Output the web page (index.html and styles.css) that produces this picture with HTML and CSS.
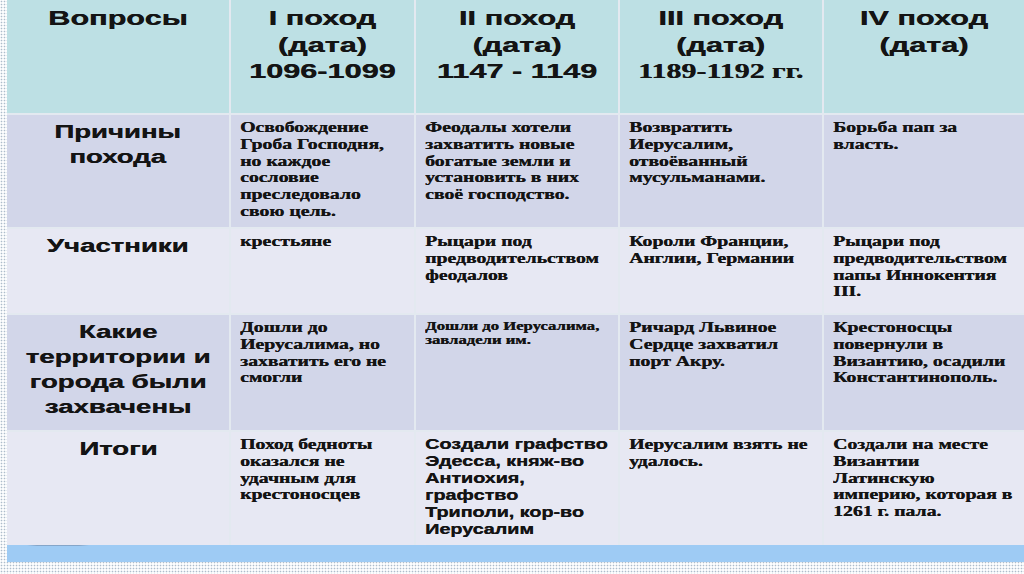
FILE: index.html
```html
<!DOCTYPE html>
<html lang="ru">
<head>
<meta charset="utf-8">
<title>Крестовые походы</title>
<link rel="stylesheet" href="styles.css">
</head>
<body>
<div class="sheet">
  <div class="grid">
    <div class="cell head"><div class="t hd">Вопросы</div></div>
    <div class="cell head"><div class="t hd">I поход<br>(дата)<br>1096-1099</div></div>
    <div class="cell head"><div class="t hd">II поход<br>(дата)<br>1147 - 1149</div></div>
    <div class="cell head"><div class="t hd">III поход<br>(дата)<br><span class="num">1189-1192 гг.</span></div></div>
    <div class="cell head"><div class="t hd">IV поход<br>(дата)</div></div>

    <div class="cell odd"><div class="t q">Причины<br>похода</div></div>
    <div class="cell odd"><div class="t s">Освобождение<br>Гроба Господня,<br>но каждое<br>сословие<br>преследовало<br>свою цель.</div></div>
    <div class="cell odd"><div class="t s">Феодалы хотели<br>захватить новые<br>богатые земли и<br>установить в них<br>своё господство.</div></div>
    <div class="cell odd"><div class="t s">Возвратить<br>Иерусалим,<br>отвоёванный<br>мусульманами.</div></div>
    <div class="cell odd"><div class="t s">Борьба пап за<br>власть.</div></div>

    <div class="cell even"><div class="t q">Участники</div></div>
    <div class="cell even"><div class="t s">крестьяне</div></div>
    <div class="cell even"><div class="t s">Рыцари под<br>предводительством<br>феодалов</div></div>
    <div class="cell even"><div class="t s">Короли Франции,<br>Англии, Германии</div></div>
    <div class="cell even"><div class="t s">Рыцари под<br>предводительством<br>папы Иннокентия<br>III.</div></div>

    <div class="cell odd"><div class="t q">Какие<br>территории и<br>города были<br>захвачены</div></div>
    <div class="cell odd"><div class="t s">Дошли до<br>Иерусалима, но<br>захватить его не<br>смогли</div></div>
    <div class="cell odd"><div class="t sm">Дошли до Иерусалима,<br>завладели им.</div></div>
    <div class="cell odd"><div class="t s">Ричард Львиное<br>Сердце захватил<br>порт Акру.</div></div>
    <div class="cell odd"><div class="t s">Крестоносцы<br>повернули в<br>Византию, осадили<br>Константинополь.</div></div>

    <div class="cell even"><div class="t q">Итоги</div></div>
    <div class="cell even"><div class="t s">Поход бедноты<br>оказался не<br>удачным для<br>крестоносцев</div></div>
    <div class="cell even"><div class="t ss">Создали графство<br>Эдесса, княж-во<br>Антиохия,<br>графство<br>Триполи, кор-во<br>Иерусалим</div></div>
    <div class="cell even"><div class="t s">Иерусалим взять не<br>удалось.</div></div>
    <div class="cell even"><div class="t s">Создали на месте<br>Византии<br>Латинскую<br>империю, которая в<br>1261 г. пала.</div></div>
  </div>
  <div class="bar"></div>
</div>
</body>
</html>
```

FILE: styles.css
```css
* {
  box-sizing: border-box;
  margin: 0;
  padding: 0;
}

html, body {
  width: 1024px;
  height: 574px;
  overflow: hidden;
}

body {
  background-color: #fcfdfe;
  background-image: radial-gradient(circle at center, #adbccb 0.7px, transparent 1.1px);
  background-size: 3px 3px;
}

.sheet {
  margin-left: 7px;
  width: 1017px;
}

.grid {
  display: grid;
  grid-template-columns: 222px 183px 202px 202px 200px;
  grid-template-rows: 113px 112px 84px 115px 113px;
  gap: 2px;
  background: #e3e9f0;
}

.cell {
  padding: 4px 9px 0;
  min-width: 0;
  overflow: hidden;
}

.head {
  background: #bde0e4;
  padding-top: 5px;
}

.odd {
  background: #d2d6e9;
}

.even {
  background: #e7e8f3;
}

.t {
  width: max-content;
  white-space: nowrap;
  color: #141414;
  text-shadow: 0.35px 0 0 #141414;
}

.hd {
  margin: 0 auto;
  font: bold 21px/26.5px "Liberation Sans", Arial, sans-serif;
  text-align: center;
  transform: scaleX(1.46);
  transform-origin: 50% 0;
}

.num {
  font: bold 20.5px "Liberation Serif", "Times New Roman", serif;
}

.q {
  margin: 0 auto;
  font: bold 18.5px/25px "Liberation Sans", Arial, sans-serif;
  text-align: center;
  transform: scaleX(1.49);
  transform-origin: 50% 0;
}

.s {
  font: bold 14.5px/16.8px "Liberation Serif", "Times New Roman", serif;
  transform: scaleX(1.36);
  transform-origin: 0 0;
}

.ss {
  font: bold 14.5px/17px "Liberation Sans", Arial, sans-serif;
  transform: scaleX(1.36);
  transform-origin: 0 0;
}

.sm {
  font: bold 12px/14px "Liberation Serif", "Times New Roman", serif;
  transform: scaleX(1.39);
  transform-origin: 0 0;
}

.bar {
  height: 17px;
  background:
    linear-gradient(to right, transparent 20px, rgba(100, 120, 150, 0.45) 30px, rgba(100, 120, 150, 0.45) 72px, transparent 82px) 0 0 / 100% 1px no-repeat,
    #9ecbf4;
}
```
